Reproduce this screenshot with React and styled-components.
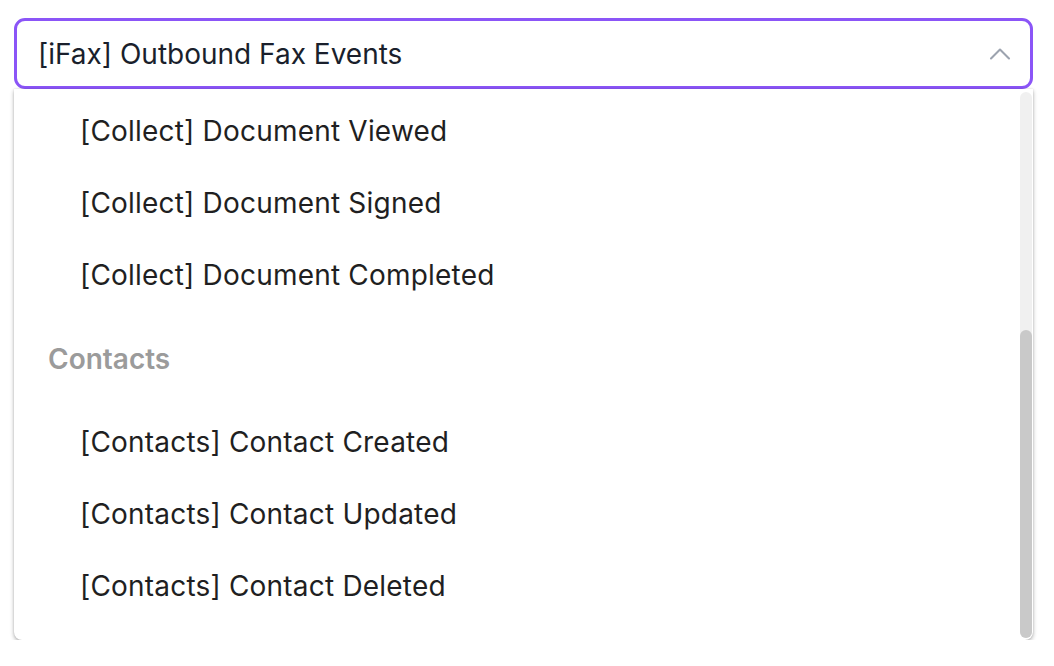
import React from "react";
import styled, { createGlobalStyle } from "styled-components";
import { ChevronUp } from "lucide-react";

const GlobalStyle = createGlobalStyle`
  html, body {
    margin: 0;
    padding: 0;
    background: #ffffff;
  }
  body {
    font-family: Inter, "Noto Sans", sans-serif;
  }
`;

const Page = styled.div`
  padding: 18px 21px 0 14px;
  width: 1054px;
  box-sizing: border-box;
`;

const Wrap = styled.div`
  position: relative;
  width: 1019px;
`;

const Trigger = styled.div`
  height: 71px;
  box-sizing: border-box;
  border: 3px solid #8b55f7;
  border-radius: 11px;
  display: flex;
  align-items: center;
  justify-content: space-between;
  padding: 0 12px 0 21px;
  background: #ffffff;
`;

const Value = styled.span`
  font-size: 28px;
  color: #1a1f2c;
`;

const Menu = styled.div`
  position: relative;
  height: 551px;
  box-sizing: border-box;
  overflow: hidden;
  padding: 6px 0;
  background: #ffffff;
  border-radius: 0 0 8px 8px;
  box-shadow: 0 2px 4px rgba(0, 0, 0, 0.3), 0 0 2px rgba(0, 0, 0, 0.12);
`;

const Track = styled.div`
  position: absolute;
  top: 3px;
  bottom: 2px;
  right: 1px;
  width: 12px;
  border-radius: 6px;
  background: #f0f0f0;
`;

const Thumb = styled.div`
  position: absolute;
  left: 0;
  right: 0;
  bottom: 0;
  border-radius: 6px;
  background: #c9c9c9;
`;

const Group = styled.div`
  padding-bottom: 12px;
`;

const GroupLabel = styled.div`
  height: 72px;
  margin-bottom: 11px;
  display: flex;
  align-items: center;
  padding-left: 34px;
  font-size: 28px;
  font-weight: 600;
  color: #9b9b9b;
`;

const Option = styled.div`
  height: 72px;
  display: flex;
  align-items: center;
  padding-left: 66px;
  font-size: 28px;
  letter-spacing: 0.2px;
  color: #1f1f22;
`;

// only the part of the list that is scrolled into view
const groups = [
  {
    name: "Collect",
    showLabel: false,
    items: [
      "[Collect] Document Viewed",
      "[Collect] Document Signed",
      "[Collect] Document Completed",
    ],
  },
  {
    name: "Contacts",
    showLabel: true,
    items: [
      "[Contacts] Contact Created",
      "[Contacts] Contact Updated",
      "[Contacts] Contact Deleted",
    ],
  },
];

const thumbRatio = 0.564;

export default function App() {
  return (
    <>
      <GlobalStyle />
      <Page>
        <Wrap>
          <Trigger>
            <Value>[iFax] Outbound Fax Events</Value>
            <ChevronUp size={36} strokeWidth={1.4} color="#9ca3af" />
          </Trigger>
          <Menu>
            {groups.map((g) => (
              <Group key={g.name}>
                {g.showLabel && <GroupLabel>{g.name}</GroupLabel>}
                {g.items.map((item) => (
                  <Option key={item}>{item}</Option>
                ))}
              </Group>
            ))}
            <Track>
              <Thumb style={{ height: `${thumbRatio * 100}%` }} />
            </Track>
          </Menu>
        </Wrap>
      </Page>
    </>
  );
}
